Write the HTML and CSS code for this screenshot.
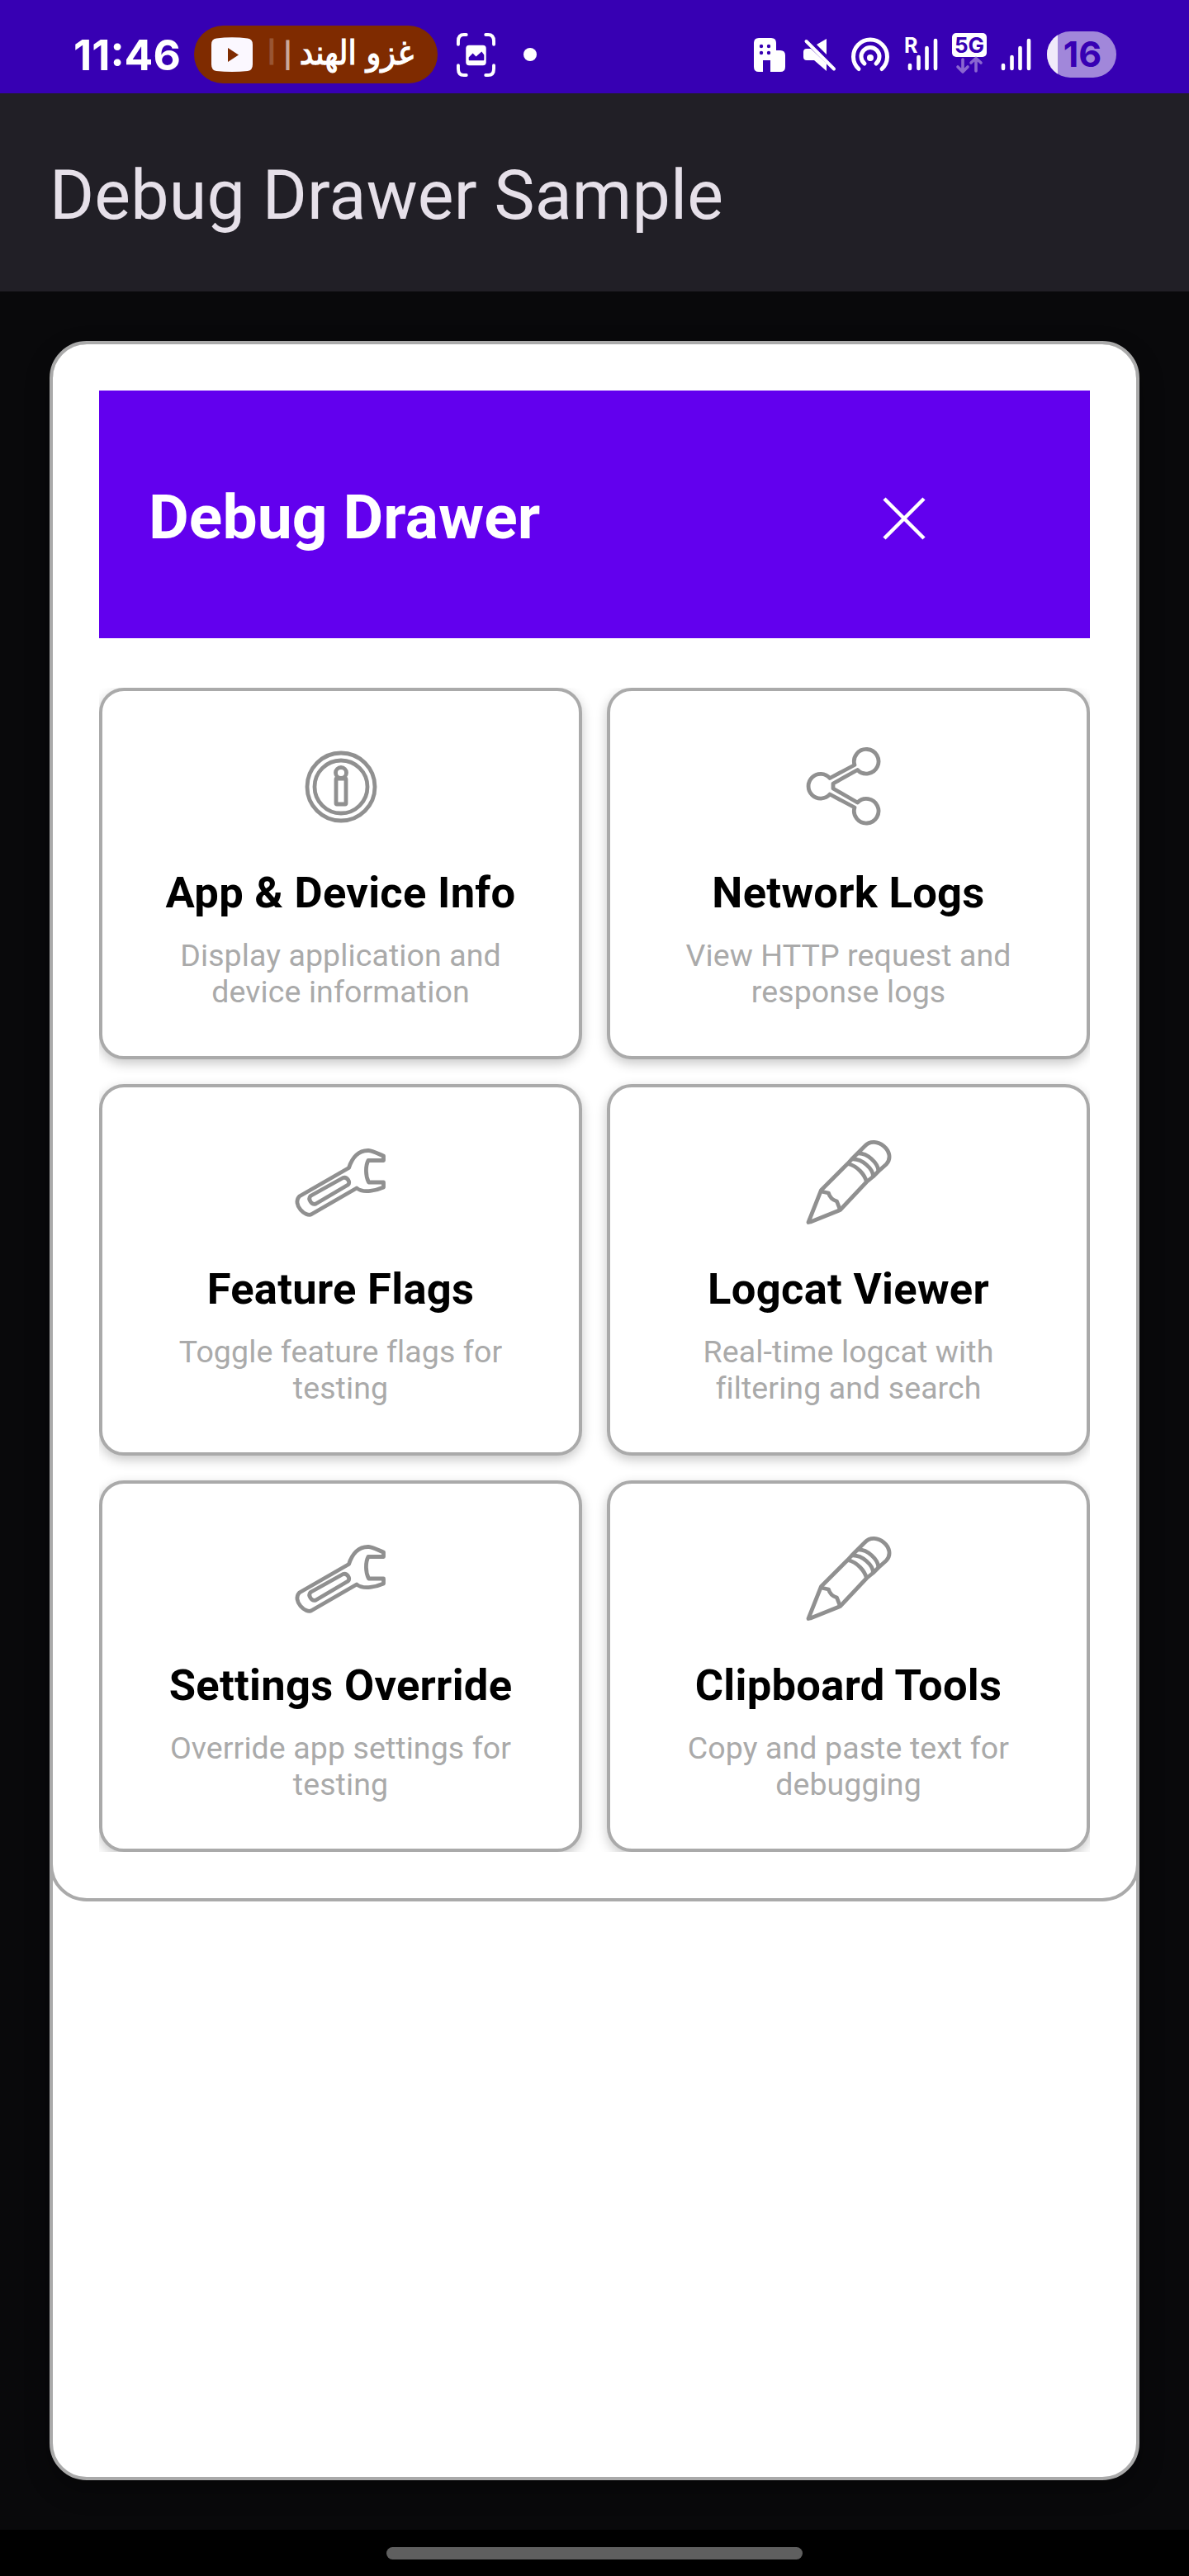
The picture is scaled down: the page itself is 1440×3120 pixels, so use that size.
FILE: index.html
```html
<!DOCTYPE html>
<html lang="en">
<head>
<meta charset="utf-8">
<title>Debug Drawer Sample</title>
<link rel="stylesheet" href="styles.css">
</head>
<body>
<svg class="defs" width="0" height="0" aria-hidden="true">
  <defs>
    <symbol id="wrench" viewBox="332.5 1360 160 140">
      <path d="M422 1414.500C426 1402 434 1393 446 1393.500C452 1394 458 1398 464 1400V1405.500H445.500C442 1412 442 1424 446 1432H464V1438C456 1441.500 440 1446 431.500 1439L377 1470.500C370 1475 353 1459 362 1449Z"/>
      <path d="M375.500 1448.500L415 1426.500C420 1425 424.500 1432 421 1435L382 1458C377 1460 372 1452.500 375.500 1448.500Z"/>
    </symbol>
    <symbol id="pencil" viewBox="947.5 1360 160 140">
      <path d="M978.500 1480.500L994 1441.500L1026 1409.500L1031 1404L1038 1397L1047 1388C1060 1374 1086 1395 1073 1410L1063.500 1418.500L1057 1425L1049 1431.500L1017 1465.500L981 1480Z"/>
      <path d="M994 1443L1003 1445C1004 1449 1007 1453 1013 1455L1017 1465.500"/>
      <path d="M1026 1409.500C1038 1412 1047 1423 1049 1431.500M1031 1404C1044 1403 1057 1416 1057 1425M1038 1397C1050 1396 1063 1409 1063.500 1418.500"/>
    </symbol>
  </defs>
</svg>

<header class="status-bar">
  <div class="status-left">
    <span class="clock">11:46</span>
    <div class="media-chip">
      <svg class="play" viewBox="0 0 50 42"><path fill="#fbf8ff" d="M6 1.500Q25-1 44 1.500Q50 2 50 9V33Q50 40 44 41Q25 43 6 41Q0 40 0 33V9Q0 2 6 1.500Z"/><path fill="#7f2b00" d="M20 13V30L33 21.500Z"/></svg>
      <span class="chip-text" lang="ar" dir="rtl"><span>غزو الهند</span><span class="bar">|</span><span class="faded">ا</span></span>
    </div>
    <svg class="capture" viewBox="0 0 48 56"><g fill="none" stroke="#fff" stroke-width="4" stroke-linecap="round"><path d="M2 15V11Q2 3 9 3H12M36 3H39Q46 3 46 11V15M46 41V45Q46 53 39 53H36M12 53H9Q2 53 2 45V41"/></g><rect x="11.500" y="16" width="25" height="25" rx="4" fill="#fff"/><path fill="#3700b3" d="M15 34V31L20 26L24 30L31 24L34 28V34Q34 35 32 35H17Q15 35 15 34Z"/></svg>
    <span class="dot"></span>
  </div>
  <div class="status-right">
    <svg width="484" height="113" viewBox="896 0 484 113" role="img" aria-label="Status icons">
      <path fill="#fff" fill-rule="evenodd" d="M919 46H934Q940 46 940 52V61H945Q951 61 951 67V81Q951 87 945 87H933V73H924V87H919Q913 87 913 81V52Q913 46 919 46Z"/>
      <g fill="#3700b3"><circle cx="922" cy="56" r="2.200"/><circle cx="931" cy="56" r="2.200"/><circle cx="922" cy="64" r="2.200"/><circle cx="931" cy="64" r="2.200"/></g>
      <path fill="#fff" d="M1001 47V66L989 54ZM977 59H982L1001 77V86L986 73H977Q973 73 973 69V63Q973 59 977 59Z"/>
      <path stroke="#fff" stroke-width="4" stroke-linecap="round" d="M976.500 50L1010 83.500"/>
      <g fill="none" stroke="#fff" stroke-width="5" stroke-linecap="round"><path d="M1040 83.500A20.500 20.500 0 1 1 1068 83.500M1047 77A11 11 0 1 1 1061 77"/></g>
      <circle cx="1054" cy="70" r="4" fill="#fff"/>
      <text class="roaming" x="1095" y="64">R</text>
      <g stroke="#fff" stroke-width="4.600" stroke-linecap="round"><path d="M1102 79V83M1112.500 69V83M1122.500 58V83M1133 49V83M1215 79V83M1225.500 69V83M1235.500 58V83M1246 49V83"/></g>
      <rect x="1153" y="40" width="42" height="29" rx="5" fill="#fff"/>
      <text class="net" x="1174" y="63.500" text-anchor="middle">5G</text>
      <g fill="none" stroke="#8a66d0" stroke-width="3.600" stroke-linecap="round" stroke-linejoin="round"><path d="M1166 72V86M1160 81L1166 87L1172 81M1182 86V72M1176 76L1182 70.500L1188 76"/></g>
      <clipPath id="battery"><rect x="1268" y="38" width="84" height="56" rx="28"/></clipPath>
      <g clip-path="url(#battery)"><path fill="#a187da" d="M1268 38H1352V94H1268Z"/><path fill="#f0eafa" d="M1268 38H1281V94H1268Z"/></g>
      <text class="level" x="1311" y="81" text-anchor="middle">16</text>
    </svg>
  </div>
</header>

<div class="app-bar"><h1>Debug Drawer Sample</h1></div>

<main class="stage">
  <section class="drawer">
    <div class="panel">
      <div class="panel-header">
        <h2>Debug Drawer</h2>
        <svg class="close" viewBox="0 0 60 60"><path d="M6 6L54 54M54 6L6 54"/></svg>
      </div>
      <div class="tiles">
        <article class="tile">
          <svg class="icon" viewBox="332 880 160 140"><circle cx="412" cy="953" r="41"/><circle cx="412" cy="953" r="32"/><circle cx="412" cy="936" r="6.500"/><rect x="406" y="943" width="12" height="31" rx="1"/></svg>
          <h3>App &amp; Device Info</h3>
          <p>Display application and<br>device information</p>
        </article>
        <article class="tile">
          <svg class="icon" viewBox="947 880 160 140"><path d="M1004 942.500L1034 926.500A14.800 14.800 0 1 1 1037.500 932.500L1008 949V955L1037.500 972A14.800 14.800 0 1 1 1034 978L1004 962A14.800 14.800 0 1 1 1004 942.500Z"/></svg>
          <h3>Network Logs</h3>
          <p>View HTTP request and<br>response logs</p>
        </article>
        <article class="tile">
          <svg class="icon"><use href="#wrench"/></svg>
          <h3>Feature Flags</h3>
          <p>Toggle feature flags for<br>testing</p>
        </article>
        <article class="tile">
          <svg class="icon"><use href="#pencil"/></svg>
          <h3>Logcat Viewer</h3>
          <p>Real-time logcat with<br>filtering and search</p>
        </article>
        <article class="tile">
          <svg class="icon"><use href="#wrench"/></svg>
          <h3>Settings Override</h3>
          <p>Override app settings for<br>testing</p>
        </article>
        <article class="tile">
          <svg class="icon"><use href="#pencil"/></svg>
          <h3>Clipboard Tools</h3>
          <p>Copy and paste text for<br>debugging</p>
        </article>
      </div>
    </div>
  </section>
</main>

<footer class="nav-bar"><span class="handle"></span></footer>
</body>
</html>
```

FILE: styles.css
```css
* { box-sizing: border-box; }
body {
  margin: 0;
  width: 1440px;
  height: 3120px;
  display: flex;
  flex-direction: column;
  background: #09090b;
  font-family: Roboto, sans-serif;
}
h1, h2, h3, p { margin: 0; }
.defs { position: absolute; }

.status-bar {
  height: 113px;
  background: #3700b3;
  color: #fff;
  display: flex;
  justify-content: space-between;
}
.status-left {
  display: flex;
  align-items: center;
  padding: 19px 0 0 89px;
}
.clock {
  width: 146px;
  font: 700 51.5px/60px Inter, sans-serif;
  white-space: nowrap;
}
.media-chip {
  width: 295px;
  height: 70px;
  border-radius: 35px;
  background: #7f2b00;
  display: flex;
  align-items: center;
  justify-content: space-between;
  padding: 0 29px 0 21px;
}
.play { width: 50px; height: 42px; flex-shrink: 0; }
.chip-text {
  display: flex;
  gap: 9px;
  font: 400 41px/60px "DejaVu Sans Condensed", "DejaVu Sans", sans-serif;
  font-stretch: condensed;
  -webkit-text-stroke: 1.2px #fff;
  white-space: nowrap;
  padding-bottom: 4px;
}
.bar { font-size: 36px; opacity: .6; }
.faded { opacity: .2; }
.capture { width: 47px; height: 55px; margin-left: 23px; }
.dot { width: 16px; height: 16px; border-radius: 50%; background: #fff; margin-left: 34px; }
.status-right { width: 544px; }
.status-right svg { display: block; }
.status-right text { font-family: Inter, sans-serif; font-weight: 700; }
.roaming { font-size: 25px; fill: #fff; }
.net { font-size: 26px; fill: #3700b3; }
.level { font-size: 43px; fill: #3700b3; }

.app-bar {
  height: 240px;
  background: #211f26;
  padding: 6px 0 0 60px;
  display: flex;
  align-items: center;
}
h1 { font-size: 82.5px; font-weight: 400; line-height: 105px; letter-spacing: .2px; color: #e6e0e9; }

.stage { height: 2711px; padding: 60px; }
.drawer {
  height: 2591px;
  border: 4px solid #aaa;
  border-radius: 45px;
  background: #fff;
  overflow: hidden;
  box-shadow: 0 12px 30px rgba(0, 0, 0, .3);
}
.panel {
  height: 1890px;
  margin: -4px -4px 0;
  border: 4px solid #aaa;
  border-radius: 45px;
  padding: 56px;
  display: flex;
  flex-direction: column;
  gap: 60px;
}
.panel-header {
  height: 300px;
  flex-shrink: 0;
  background: #6200ee;
  display: flex;
  align-items: center;
  justify-content: space-between;
  padding: 6px 195px 0 60px;
}
h2 { font-size: 75px; font-weight: 700; line-height: 90px; letter-spacing: .1px; color: #fff; }
.close { width: 60px; height: 60px; margin-top: 4px; stroke: #fff; stroke-width: 4.500; fill: none; }
.tiles {
  display: grid;
  grid-template-columns: 585px 585px;
  grid-auto-rows: 450px;
  gap: 30px;
  overflow: hidden;
}
.tile {
  border: 4px solid #aaa;
  border-radius: 30px;
  background: #fff;
  box-shadow: 0 5px 14px rgba(0, 0, 0, .22);
  display: flex;
  flex-direction: column;
  align-items: center;
  padding-top: 43px;
  text-align: center;
}
.icon { width: 160px; height: 140px; flex-shrink: 0; fill: none; stroke: #909090; stroke-width: 4.800; stroke-linejoin: round; }
h3 { margin-top: 28px; font-size: 52.500px; line-height: 66px; font-weight: 700; letter-spacing: .3px; color: #000; }
p { margin-top: 21px; font-size: 37.500px; line-height: 44px; letter-spacing: .1px; color: #aaa; }

.nav-bar { height: 56px; background: #000; display: flex; justify-content: center; padding-top: 21px; }
.handle { width: 504px; height: 15px; border-radius: 8px; background: #5f5f5f; }
```
